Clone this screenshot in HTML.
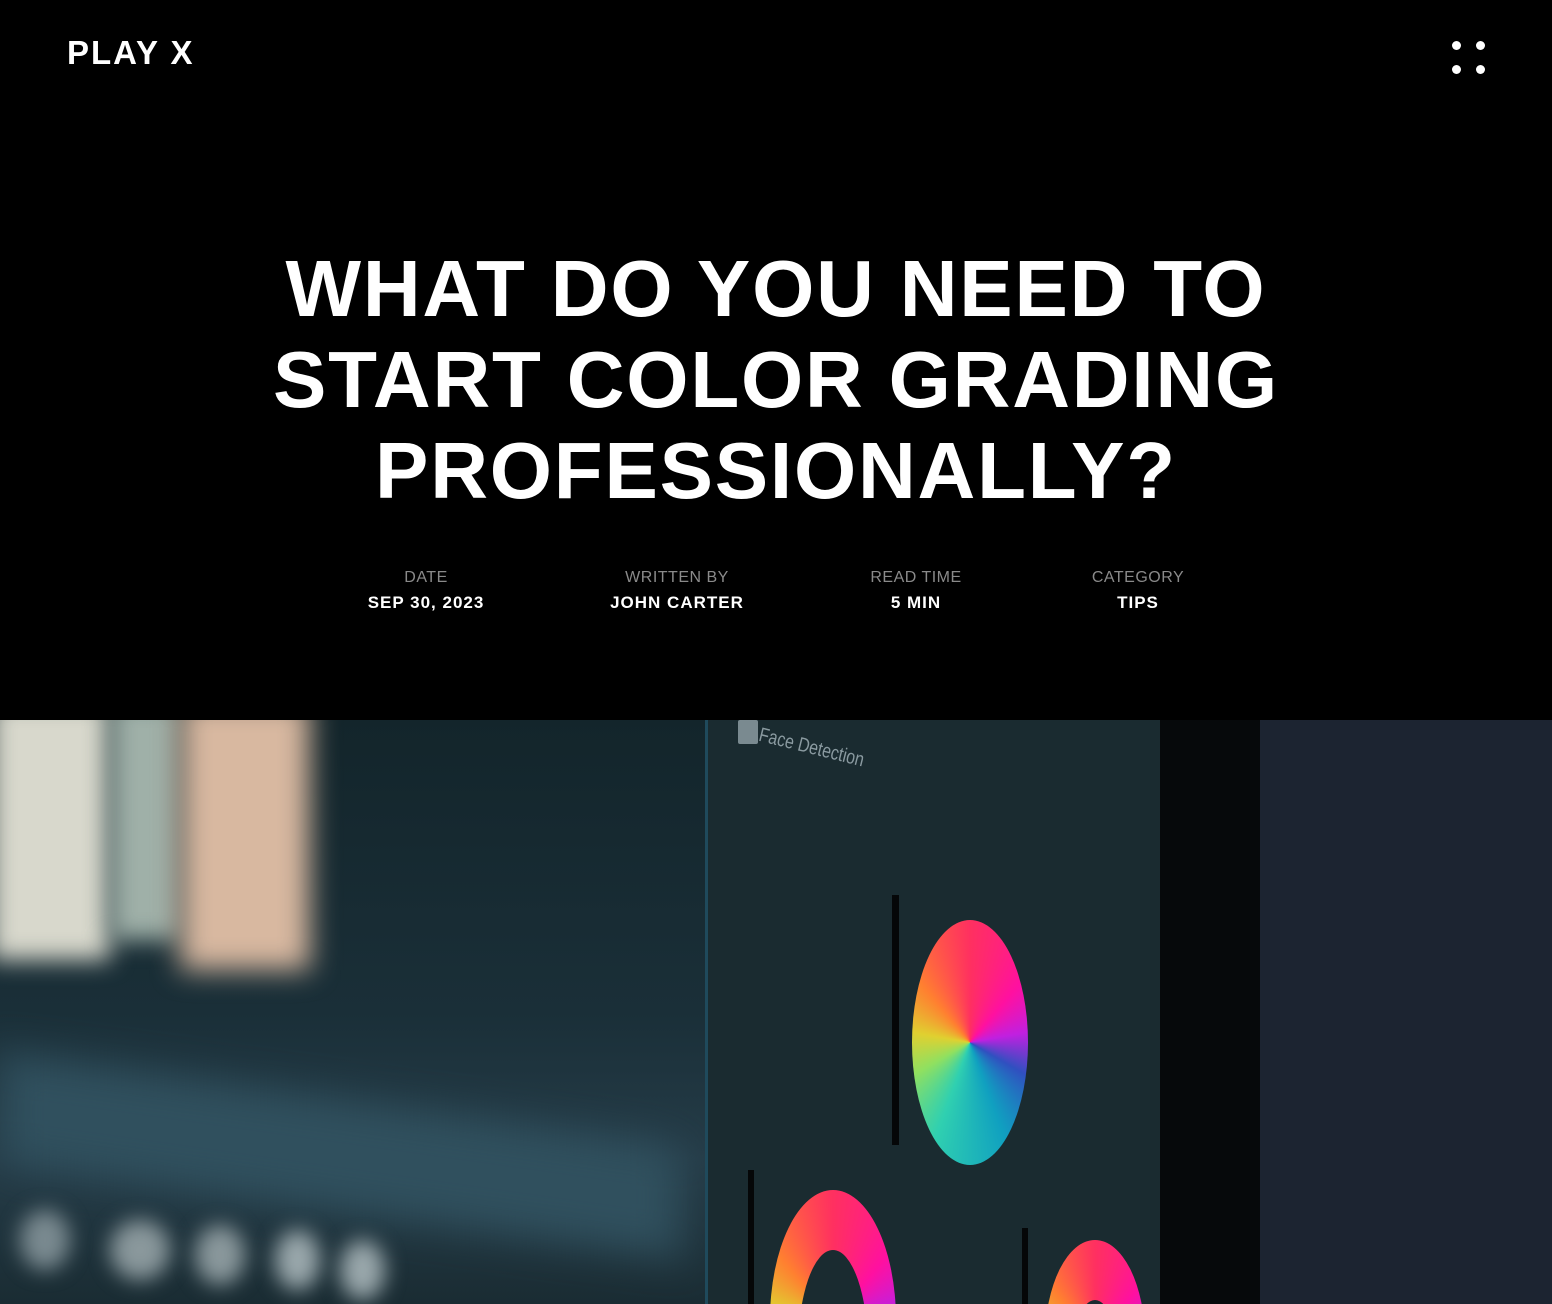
<!DOCTYPE html>
<html style="overflow:hidden"><head><meta charset="utf-8"><style>
*{margin:0;padding:0;box-sizing:border-box}
body{width:1552px;height:1304px;background:#000;overflow:hidden;font-family:"Liberation Sans",sans-serif;color:#fff;position:relative}
.logo{position:absolute;left:67px;top:34px;font-weight:bold;font-size:33px;letter-spacing:2px}
.dots{position:absolute;left:1452px;top:41px;width:34px;height:34px}
.dots i{position:absolute;width:9px;height:9px;border-radius:50%;background:#fff}
h1{position:absolute;left:0;width:1552px;top:243px;text-align:center;font-size:80px;line-height:91px;font-weight:bold;letter-spacing:1.8px}
.meta{position:absolute;top:569px;text-align:center;transform:translateX(-50%);white-space:nowrap}
.meta .l{font-size:16px;color:#8a8a8a;letter-spacing:.5px}
.meta .v{font-size:17px;font-weight:bold;letter-spacing:1px;margin-top:6px}
.img{position:absolute;left:0;top:720px;width:1552px;height:584px;overflow:hidden;background:#1b2a30}
.img div{position:absolute}
.wheel{border-radius:50%;background:conic-gradient(from 0deg,#ff3060,#ff10a0,#c020e0,#3050c0,#10a0c0,#30d0b0,#90e060,#e0d030,#ff8030,#ff3060)}
</style></head><body>
<div class="logo">PLAY X</div>
<div class="dots"><i style="left:0;top:0"></i><i style="left:24px;top:0"></i><i style="left:0;top:24px"></i><i style="left:24px;top:24px"></i></div>
<h1>WHAT DO YOU NEED TO<br>START COLOR GRADING<br>PROFESSIONALLY?</h1>
<div class="meta" style="left:426px"><div class="l">DATE</div><div class="v">SEP 30, 2023</div></div>
<div class="meta" style="left:677px"><div class="l">WRITTEN BY</div><div class="v">JOHN CARTER</div></div>
<div class="meta" style="left:916px"><div class="l">READ TIME</div><div class="v">5 MIN</div></div>
<div class="meta" style="left:1138px"><div class="l">CATEGORY</div><div class="v">TIPS</div></div>
<div class="img">
 <div style="left:0;top:0;width:710px;height:584px;background:linear-gradient(180deg,#13252b 0%,#1a2f38 50%,#253c48 75%,#1a2c33 100%)"></div>
 <div style="left:-10px;top:-20px;width:120px;height:260px;background:#d8d8cc;filter:blur(12px)"></div>
 <div style="left:110px;top:-20px;width:70px;height:240px;background:#9fb0a8;filter:blur(12px)"></div>
 <div style="left:180px;top:-20px;width:130px;height:270px;background:#d8b8a0;filter:blur(14px)"></div>
 <div style="left:0;top:380px;width:680px;height:110px;background:#30505e;filter:blur(20px);transform:skewY(8deg)"></div>
 <div style="left:20px;top:490px;width:50px;height:60px;border-radius:50%;background:#7a8a90;filter:blur(10px)"></div>
 <div style="left:110px;top:500px;width:60px;height:60px;border-radius:50%;background:#8a989c;filter:blur(10px)"></div>
 <div style="left:195px;top:505px;width:50px;height:60px;border-radius:50%;background:#8a989c;filter:blur(10px)"></div>
 <div style="left:275px;top:510px;width:45px;height:60px;border-radius:50%;background:#9aa8ac;filter:blur(10px)"></div>
 <div style="left:340px;top:520px;width:45px;height:60px;border-radius:50%;background:#9aa8ac;filter:blur(10px)"></div>
 <div style="left:705px;top:0;width:3px;height:584px;background:#1f4a5c"></div>
 <div style="left:708px;top:0;width:452px;height:584px;background:#1a2b30"></div>
 <div style="left:1160px;top:0;width:100px;height:584px;background:#06090b"></div>
 <div style="left:1260px;top:0;width:292px;height:584px;background:#1c2431"></div>
 <div style="left:892px;top:175px;width:7px;height:250px;background:#050708"></div>
 <div style="left:912px;top:200px;width:116px;height:245px" class="wheel"></div>
 <div style="left:770px;top:470px;width:126px;height:260px" class="wheel"></div>
 <div style="left:798px;top:530px;width:70px;height:200px;border-radius:50%;background:#1a2b30"></div>
 <div style="left:1045px;top:520px;width:100px;height:200px" class="wheel"></div>
 <div style="left:1070px;top:580px;width:50px;height:140px;border-radius:50%;background:#1a2b30"></div>
 <div style="left:748px;top:450px;width:6px;height:134px;background:#050708"></div>
 <div style="left:1022px;top:508px;width:6px;height:80px;background:#050708"></div>
 <div style="left:738px;top:0;width:20px;height:24px;background:#7a8a90;border-radius:2px"></div>
 <div style="left:762px;top:4px;color:#8a9aa0;font-size:20px;transform:rotate(14deg) scaleX(0.8);transform-origin:left top">Face Detection</div>
</div>
</body></html>
